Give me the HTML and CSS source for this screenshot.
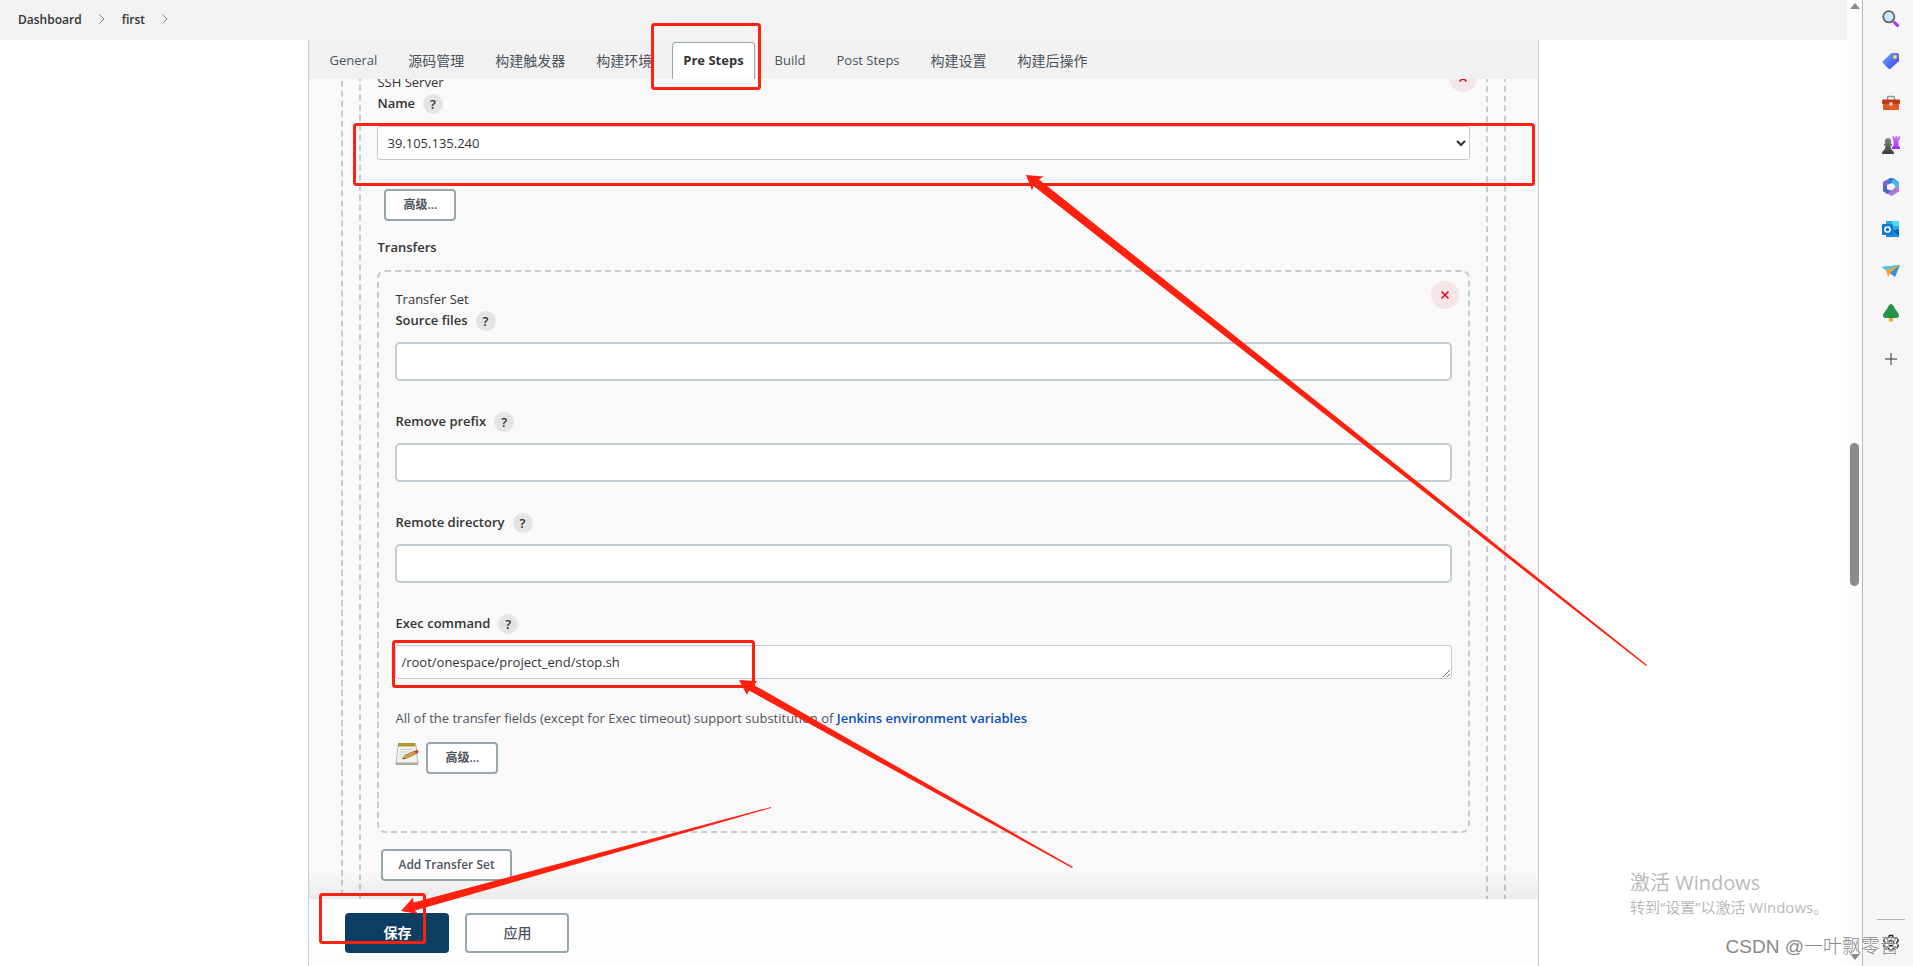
FILE: index.html
```html
<!DOCTYPE html>
<html lang="zh-CN">
<head>
<meta charset="utf-8">
<title>first Config [Jenkins]</title>
<link rel="stylesheet" href="styles.css">
</head>
<body>
<div class="browser">
  <div class="page">
    <nav class="breadcrumbs" aria-label="breadcrumbs">
      <a href="#" class="crumb">Dashboard</a>
      <svg class="chevron" viewBox="0 0 8 12"><path d="M1.500 1.500 6 6l-4.500 4.500"/></svg>
      <a href="#" class="crumb">first</a>
      <svg class="chevron" viewBox="0 0 8 12"><path d="M1.500 1.500 6 6l-4.500 4.500"/></svg>
    </nav>
    <main class="panel">
      <nav class="tabs">
        <a href="#" class="tab">General</a>
        <a href="#" class="tab tab-cjk">源码管理</a>
        <a href="#" class="tab tab-cjk">构建触发器</a>
        <a href="#" class="tab tab-cjk">构建环境</a>
        <a href="#" class="tab tab-active">Pre Steps</a>
        <a href="#" class="tab">Build</a>
        <a href="#" class="tab">Post Steps</a>
        <a href="#" class="tab tab-cjk">构建设置</a>
        <a href="#" class="tab tab-cjk">构建后操作</a>
      </nav>
      <form class="config">
        <div class="frame frame-outer">
          <div class="frame frame-server">
            <button type="button" class="delete" aria-label="Delete server"><svg viewBox="0 0 8 8"><path d="M.5.5l7 7M7.500.5l-7 7"/></svg></button>
            <div class="line">SSH Server</div>
            <div class="label-row"><label for="server">Name</label><button type="button" class="help">?</button></div>
            <select id="server" class="select"><option>39.105.135.240</option></select>
            <button type="button" class="btn btn-advanced">高级...</button>
            <div class="heading">Transfers</div>
            <div class="frame frame-transfer">
              <button type="button" class="delete" aria-label="Delete transfer set"><svg viewBox="0 0 8 8"><path d="M.5.5l7 7M7.500.5l-7 7"/></svg></button>
              <div class="line">Transfer Set</div>
              <div class="field">
                <div class="label-row"><label for="source">Source files</label><button type="button" class="help">?</button></div>
                <input id="source" class="input" type="text">
              </div>
              <div class="field">
                <div class="label-row"><label for="prefix">Remove prefix</label><button type="button" class="help">?</button></div>
                <input id="prefix" class="input" type="text">
              </div>
              <div class="field">
                <div class="label-row"><label for="directory">Remote directory</label><button type="button" class="help">?</button></div>
                <input id="directory" class="input" type="text">
              </div>
              <div class="field">
                <div class="label-row"><label for="command">Exec command</label><button type="button" class="help">?</button></div>
                <textarea id="command" class="textarea" rows="1">/root/onespace/project_end/stop.sh</textarea>
              </div>
              <p class="hint">All of the transfer fields (except for Exec timeout) support substitution of <a href="#">Jenkins environment variables</a></p>
              <div class="advanced-row">
                <svg class="notepad" viewBox="0 0 24 24">
                  <path d="M3 3h18l2 19.500H1z" fill="#f1f1ee" stroke="#b9b9b4"/>
                  <path d="M1 20.500h22v2.500H1z" fill="#a9a9a5"/>
                  <path d="M3 1h17.500v3.500H3z" fill="#b8a13c"/>
                  <path d="M4 1v3M6.500 1v3M9 1v3M11.500 1v3M14 1v3M16.500 1v3M19 1v3" stroke="#8d7a25" stroke-width=".7"/>
                  <path d="M5 7.500h13M5 10h13M4.500 12.500h10M4.500 15h5" stroke="#cfcfcc"/>
                  <path d="M8 17l2-3.500 10-4.500 1.500 2.500-10 4.800z" fill="#e2a443" stroke="#8c6122" stroke-width=".7"/>
                  <path d="M19.500 9l3-1.300 1.300 2.500-2.800 1.500z" fill="#cf3d35"/>
                  <path d="M7.500 17.300l1.800-.6-.9-1.200z" fill="#333"/>
                </svg>
                <button type="button" class="btn">高级...</button>
              </div>
            </div>
            <button type="button" class="btn btn-add">Add Transfer Set</button>
          </div>
        </div>
      </form>
      <div class="footer">
        <button type="button" class="action action-primary">保存</button>
        <button type="button" class="action">应用</button>
      </div>
    </main>
  </div>

  <div class="scrollbar">
    <svg class="arrow" viewBox="0 0 10 6"><path d="M5 0l5 6H0z"/></svg>
    <div class="thumb"></div>
    <svg class="arrow" viewBox="0 0 10 6"><path d="M0 0h10L5 6z"/></svg>
  </div>

  <aside class="sidebar">
    <svg class="app" viewBox="0 0 18 18"><path d="M11.500 11.500l5 5" stroke="#b12ff0" stroke-width="3"/><circle cx="6.800" cy="6.800" r="5.600" fill="#c9e9fa" stroke="#666" stroke-width="1.800"/></svg>
    <svg class="app" viewBox="0 0 18 18"><defs><linearGradient id="tag" x2="1" y2="1"><stop stop-color="#66b0ff"/><stop offset="1" stop-color="#3a3af0"/></linearGradient></defs><path d="M9.500 1h6q1.500 0 1.500 1.500V9L8.500 16.800q-1 .6-2 0L1 11q-.8-1 0-2z" fill="url(#tag)"/><circle cx="13" cy="5" r="1.500" fill="#fff" stroke="#f0bd1a" stroke-width="1.300"/></svg>
    <svg class="app" viewBox="0 0 18 18"><path d="M5.500 6V3.500q0-1 1-1h5q1 0 1 1V6" fill="none" stroke="#8d9298" stroke-width="1.300"/><path d="M1 9h16v6q0 1-1 1H2q-1 0-1-1z" fill="#e5571e"/><path d="M1 5.500h16q1 0 1 1V9q0 1-1 1H1q-1 0-1-1V6.500q0-1 1-1z" fill="#bd390c"/><circle cx="9" cy="10" r="1.900" fill="#c9cdd1"/></svg>
    <svg class="app" viewBox="0 0 18 18"><defs><linearGradient id="pawn" x2="0" y2="1"><stop stop-color="#858585"/><stop offset="1" stop-color="#3c3c3c"/></linearGradient><linearGradient id="rook" x2="0" y2="1"><stop stop-color="#cf7bff"/><stop offset="1" stop-color="#a12cf0"/></linearGradient></defs><path d="M10.500 0h1.500v1.500h1.500V0H15v1.500h1.500V0H18v3l-1.500 1.500V10l1.500 1v2h-8v-2l1.500-1V4.500L10.500 3z" fill="url(#rook)"/><path d="M6 2a3.200 3.200 0 0 1 2.500 5.200L10 8v1.500H8.500q0 3.500 2 5 1.500.8 1.500 3.500H0q0-2.700 1.500-3.500 2-1.500 2-5H2V8l1.500-.8A3.200 3.200 0 0 1 6 2z" fill="url(#pawn)"/></svg>
    <svg class="app" viewBox="0 0 18 18"><path d="M8 0L1 4v9l4 1.500V7l5-3z" fill="#7d65cf"/><path d="M8 0l3 0 6 4v6L10 5 6 6.500V2z" fill="#2f7fd6"/><path d="M11 1l6 3.500V12l-4-2V6.500L10 5z" fill="#49b8f2"/><path d="M17 8.500v5L9.500 18 4 15l1.500-1L13 10z" fill="#a97bd6"/><path d="M1 6l4 2.500V11l4 2-4 3-4-3z" fill="#4d68cc"/><circle cx="9" cy="9" r="3" fill="#f6f6f6"/></svg>
    <svg class="app" viewBox="0 0 18 18"><path d="M4 1h13v16H4z" fill="#28a8ea"/><path d="M10 1h7v5h-7z" fill="#50d9ff"/><path d="M4 11l13-2v8H4z" fill="#1490df"/><path d="M11 11l6 5V9z" fill="#0a64ad"/><rect x="0" y="4" width="11" height="11" rx="1" fill="#0f78d4"/><circle cx="5.500" cy="9.500" r="2.600" fill="none" stroke="#fff" stroke-width="1.500"/></svg>
    <svg class="app" viewBox="0 0 18 18"><path d="M0 5l18-2-5 12-4-3z" fill="#2e8df0"/><path d="M0 5l18-2L5 9z" fill="#4dc3fa"/><path d="M4 8l14-5-9 7-3 5z" fill="#f5a623"/></svg>
    <svg class="app" viewBox="0 0 18 18"><path d="M7 13h4v4.500H7z" fill="#f2a41f"/><path d="M9 0q2 0 3 3 1 2 3 4.500 2 2.500 2 4 0 2.500-3 2.500H4q-3 0-3-2.500 0-1.500 2-4Q5 5 6 3q1-3 3-3z" fill="#22934b"/></svg>
    <svg class="app app-add" viewBox="0 0 18 18"><path d="M9 3v12M3 9h12" stroke="#333" stroke-width="1"/></svg>
    <div class="sidebar-end">
      <svg class="app" viewBox="0 0 18 18" fill="none" stroke="#222" stroke-width="1.300" stroke-linejoin="round"><path d="M7.300 1.500h3.400l.5 2.300 1.300.8 2.300-.8 1.700 3-1.800 1.500v1.400l1.800 1.500-1.700 3-2.300-.8-1.300.8-.5 2.300H7.300l-.5-2.300-1.300-.8-2.300.8-1.700-3 1.800-1.500V8.300L1.500 6.800l1.700-3 2.300.8 1.300-.8z"/><circle cx="9" cy="9" r="2.500"/></svg>
    </div>
  </aside>
</div>

<div class="activation">
  <div class="activation-title">激活 Windows</div>
  <div class="activation-text">转到“设置”以激活 Windows。</div>
</div>
<div class="watermark">CSDN @一叶飘零晋</div>

<svg class="marks" aria-hidden="true">
  <g class="mark-box">
    <rect x="652.500" y="24.500" width="107" height="64" rx="2"/>
    <rect x="354.500" y="124.500" width="1179" height="60" rx="2"/>
    <rect x="393.500" y="641.500" width="360" height="45" rx="2"/>
    <rect x="320.500" y="894.500" width="104" height="48" rx="2"/>
  </g>
  <g class="mark-arrow">
    <path d="M1026 175l17.500 1.500-4.500 3L1647 665l-1 1L1033.500 186l-1.500 4.500z"/>
    <path d="M739 680l18 1-3 4L1073 867l-1 1L749 690.500l-2 4.500z"/>
    <path d="M401 911l12-13.500.5 5L771 807v1L415 910.500l3 3.500z"/>
  </g>
</svg>
</body>
</html>
```
FILE: styles.css
```css
* { box-sizing: border-box; }

body {
  margin: 0;
  font: 13px/21px "Open Sans", "Noto Sans CJK SC", sans-serif;
  color: #333;
  background: #fff;
}

button, input, select, textarea { font: inherit; color: inherit; }
a { text-decoration: none; }

.browser { display: flex; height: 100vh; overflow: hidden; }
.page { flex: 1; min-width: 0; display: flex; flex-direction: column; }

.breadcrumbs {
  flex: none;
  display: flex;
  align-items: center;
  gap: 16px;
  height: 40px;
  padding: 0 18px 2px;
  background: #f2f2f2;
}
.crumb { font-size: 12px; font-weight: 600; color: #333; }
.chevron { width: 8px; height: 12px; fill: none; stroke: #888; }

.panel {
  flex: 1;
  min-height: 0;
  width: 66.6%;
  margin: 0 auto;
  display: flex;
  flex-direction: column;
  border: solid #c3cdd1;
  border-width: 0 1px;
  background: #f9f9f9;
}

.tabs {
  flex: none;
  display: flex;
  gap: 9px;
  padding: 2px 9px 0;
  background: #f1f1f1;
}
.tab {
  height: 37px;
  padding: 7px 10px 0;
  border: 1px solid transparent;
  border-bottom: 0;
  border-radius: 4px 4px 0 0;
  white-space: nowrap;
  color: #4d545d;
}
.tab-cjk { font-size: 14px; }
.tab-active { border-color: #98a6ae; background: #fff; color: #333; font-weight: 700; }

.config { flex: 1; min-height: 0; overflow: hidden; padding: 0 32px; position: relative; }
.config::after {
  content: "";
  position: absolute;
  inset: auto 0 0;
  height: 30px;
  background: linear-gradient(transparent, rgba(0, 0, 0, .06));
}

.frame { position: relative; border: 2px dashed #c3cdd3; border-radius: 8px; }
.frame-outer { margin-top: -60px; padding: 32px 16px; }
.frame-server { padding: 17px 16px 80px; }
.frame-transfer { padding: 17px 16px 57px; margin-top: 12px; }

.delete {
  position: absolute;
  top: 9px;
  right: 9px;
  width: 28px;
  height: 28px;
  padding: 0;
  display: grid;
  place-items: center;
  border: 0;
  border-radius: 50%;
  background: #f6e5e7;
}
.delete svg { width: 8px; height: 8px; fill: none; stroke: #e6001f; stroke-width: 1.5; }

.label-row { display: flex; align-items: center; gap: 8px; height: 21px; font-weight: 600; }
.help {
  width: 20px;
  height: 20px;
  padding: 0;
  border: 0;
  border-radius: 50%;
  background: #e4e4e4;
  font-weight: 600;
  line-height: 20px;
}

.select {
  display: block;
  width: 100%;
  height: 34px;
  margin-top: 12px;
  padding: 0 5px;
  border: 1px solid #c3cdd1;
  border-radius: 3px;
  background: #fff;
}
.input, .textarea { display: block; width: 100%; margin-top: 11px; background: #fff; }
.input { height: 39px; padding: 0 8px; border: 2px solid #c3cdd1; border-radius: 5px; }
.textarea { height: 34px; padding: 6px 5px; border: 1px solid #c3cdd1; border-radius: 3px; resize: vertical; overflow: hidden; }
.field + .field { margin-top: 30px; }

.hint { margin: 29px 0 13px; color: #4d545d; }
.hint a { color: #0b4fb5; font-weight: 600; }

.btn {
  display: block;
  height: 32px;
  padding: 0 17px;
  border: 2px solid #98a6ae;
  border-radius: 4px;
  background: #fff;
  color: #4d545d;
  font-size: 12px;
  font-weight: 600;
  line-height: 28px;
}
.btn-advanced { margin: 29px 0 16px 7px; }
.btn-add { margin: 16px 0 0 4px; padding: 0 15px; }
.heading { font-weight: 600; }
.advanced-row { display: flex; gap: 7px; }
.notepad { width: 24px; height: 24px; }

.footer { flex: none; display: flex; gap: 16px; padding: 14px 36px 13px; background: #fdfdfd; }
.action {
  width: 104px;
  height: 40px;
  padding: 0 0 2px;
  border: 2px solid #98a6ae;
  border-radius: 4px;
  background: #fff;
  color: #4d545d;
  font-size: 14px;
  font-weight: 500;
}
.action-primary { border-color: #0b3e61; background: #0b3e61; color: #fff; font-weight: 700; }

.scrollbar {
  flex: none;
  width: 15px;
  padding: 3px 0 6px;
  display: flex;
  flex-direction: column;
  align-items: center;
  background: #fcfcfc;
}
.arrow { width: 10px; height: 6px; fill: #8b8b8b; }
.thumb { width: 9px; height: 143px; margin: 434px 0 auto; border-radius: 5px; background: #8b8b8b; }

.sidebar {
  flex: none;
  width: 51px;
  padding: 10px 0 14px 6px;
  display: flex;
  flex-direction: column;
  align-items: center;
  gap: 24px;
  border-left: 1px solid #b8b8b8;
  background: #f6f6f6;
}
.app { width: 18px; height: 18px; }
.app-add { margin-top: 4px; }
.sidebar-end { width: 28px; margin-top: auto; padding-top: 14px; border-top: 1px solid #b8b8b8; display: grid; place-items: center; }

.activation { position: absolute; right: 90px; bottom: 48px; width: 193px; color: #b9b9b9; white-space: nowrap; }
.activation-title { font-size: 20px; line-height: 26px; }
.activation-text { font-size: 15px; line-height: 22px; }
.watermark {
  position: absolute;
  right: 14px;
  bottom: 7px;
  font: 19px/24px "Liberation Sans", "Noto Sans CJK SC", sans-serif;
  font-weight: 300;
  color: #888;
  text-shadow: 1px 1px 0 rgba(255, 255, 255, .7);
  white-space: nowrap;
}

.marks { position: absolute; top: 0; left: 0; width: 100%; height: 100%; pointer-events: none; }
.mark-box { fill: none; stroke: #ff2010; stroke-width: 3; }
.mark-arrow { fill: #ff2010; }
```
